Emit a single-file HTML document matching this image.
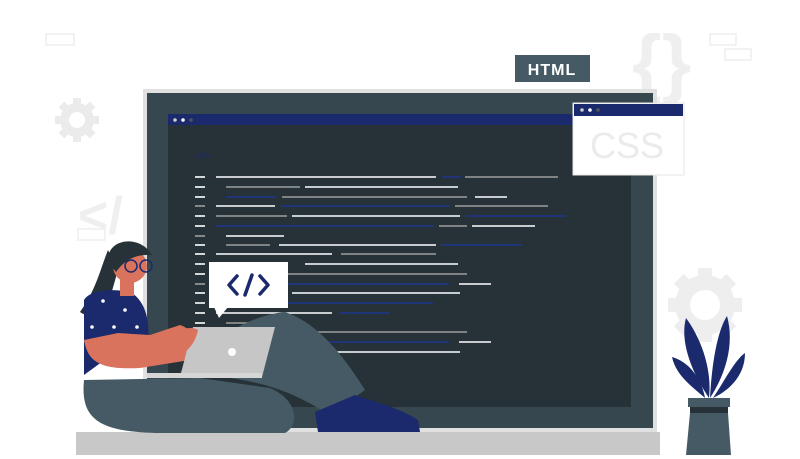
<!DOCTYPE html>
<html><head><meta charset="utf-8"><style>html,body{margin:0;padding:0;background:#fff;width:800px;height:459px;overflow:hidden}svg{display:block}</style></head>
<body>
<svg width="800" height="459" viewBox="0 0 800 459" xmlns="http://www.w3.org/2000/svg" font-family="Liberation Sans, sans-serif">
<rect x="46" y="34" width="28" height="11" fill="none" stroke="#eee" stroke-width="1.5"/>
<rect x="710" y="34" width="26" height="11" fill="none" stroke="#eee" stroke-width="1.5"/>
<rect x="725" y="49" width="26" height="11" fill="none" stroke="#eee" stroke-width="1.5"/>
<rect x="78" y="229" width="27" height="11" fill="none" stroke="#eee" stroke-width="1.5"/>
<text x="632" y="88" font-size="76" fill="#efefef" font-weight="bold">{}</text>
<g fill="#ebebeb"><circle cx="77" cy="120" r="17"/><rect x="73" y="98" width="8" height="44"/><rect x="55" y="116" width="44" height="8"/><rect x="73" y="98" width="8" height="44" transform="rotate(45 77 120)"/><rect x="73" y="98" width="8" height="44" transform="rotate(-45 77 120)"/></g>
<circle cx="77" cy="120" r="8" fill="#fff"/>
<text x="78" y="233" font-size="52" fill="#efefef" font-weight="bold">&lt;/</text>
<g fill="#eeeeee"><circle cx="705" cy="305" r="30"/><rect x="698" y="268" width="14" height="74"/><rect x="668" y="298" width="74" height="14"/><rect x="698" y="268" width="14" height="74" transform="rotate(45 705 305)"/><rect x="698" y="268" width="14" height="74" transform="rotate(-45 705 305)"/></g>
<circle cx="705" cy="305" r="15" fill="#fff"/>
<rect x="143" y="89" width="514" height="344" fill="#e0e0e0"/>
<rect x="147" y="93" width="506" height="335" fill="#37474f"/>
<rect x="168" y="114" width="463" height="293" fill="#263238"/>
<rect x="168" y="114" width="430" height="11" fill="#1a2a6c"/>
<circle cx="175" cy="120" r="1.8" fill="#ccc"/><circle cx="183" cy="120" r="1.8" fill="#fff"/><circle cx="191" cy="120" r="1.8" fill="#555"/>
<text x="195" y="159" font-size="10" fill="#1a2a6c">&lt;/&gt;</text>
<g stroke-width="1.6">
<g stroke="#fff"><line x1="195" y1="177" x2="205" y2="177"/><line x1="216" y1="177" x2="436" y2="177"/><line x1="195" y1="187" x2="205" y2="187"/><line x1="305" y1="187" x2="458" y2="187"/><line x1="195" y1="197" x2="205" y2="197"/><line x1="475" y1="197" x2="507" y2="197"/><line x1="216" y1="206" x2="275" y2="206"/><line x1="195" y1="216" x2="205" y2="216"/><line x1="292" y1="216" x2="460" y2="216"/><line x1="195" y1="226" x2="205" y2="226"/><line x1="472" y1="226" x2="535" y2="226"/><line x1="226" y1="236" x2="284" y2="236"/><line x1="195" y1="245" x2="205" y2="245"/><line x1="279" y1="245" x2="436" y2="245"/><line x1="195" y1="254" x2="205" y2="254"/><line x1="216" y1="254" x2="332" y2="254"/><line x1="195" y1="264" x2="205" y2="264"/><line x1="305" y1="264" x2="458" y2="264"/><line x1="195" y1="274" x2="205" y2="274"/><line x1="459" y1="284" x2="491" y2="284"/><line x1="195" y1="293" x2="205" y2="293"/><line x1="292" y1="293" x2="460" y2="293"/><line x1="195" y1="303" x2="205" y2="303"/><line x1="216" y1="313" x2="332" y2="313"/><line x1="195" y1="313" x2="205" y2="313"/><line x1="195" y1="323" x2="205" y2="323"/><line x1="459" y1="342" x2="491" y2="342"/><line x1="292" y1="352" x2="460" y2="352"/></g>
<g stroke="#9e9e9e"><line x1="465" y1="177" x2="558" y2="177"/><line x1="226" y1="187" x2="300" y2="187"/><line x1="282" y1="197" x2="467" y2="197"/><line x1="195" y1="206" x2="205" y2="206"/><line x1="455" y1="206" x2="548" y2="206"/><line x1="216" y1="216" x2="287" y2="216"/><line x1="439" y1="226" x2="467" y2="226"/><line x1="195" y1="236" x2="205" y2="236"/><line x1="226" y1="245" x2="270" y2="245"/><line x1="341" y1="254" x2="436" y2="254"/><line x1="282" y1="274" x2="467" y2="274"/><line x1="195" y1="284" x2="205" y2="284"/><line x1="226" y1="323" x2="300" y2="323"/><line x1="282" y1="332" x2="467" y2="332"/></g>
<g stroke="#1f3590"><line x1="442" y1="177" x2="461" y2="177"/><line x1="226" y1="197" x2="276" y2="197"/><line x1="281" y1="206" x2="449" y2="206"/><line x1="465" y1="216" x2="566" y2="216"/><line x1="216" y1="226" x2="433" y2="226"/><line x1="441" y1="245" x2="522" y2="245"/><line x1="281" y1="284" x2="449" y2="284"/><line x1="216" y1="303" x2="433" y2="303"/><line x1="340" y1="313" x2="390" y2="313"/><line x1="281" y1="342" x2="449" y2="342"/></g>
</g>
<rect x="573" y="103" width="111" height="72" fill="#fff" stroke="#e6e6e6"/>
<rect x="574" y="104" width="109" height="12" fill="#1a2a6c"/>
<circle cx="582" cy="110" r="1.8" fill="#ccc"/><circle cx="590" cy="110" r="1.8" fill="#fff"/><circle cx="598" cy="110" r="1.8" fill="#555"/>
<text x="590" y="158" font-size="36" fill="#ebebeb">CSS</text>
<rect x="515" y="55" width="75" height="27" fill="#455a64"/>
<text x="552" y="75" font-size="16" fill="#fff" text-anchor="middle" font-weight="bold" letter-spacing="1">HTML</text>
<rect x="76" y="432" width="584" height="23" fill="#c8c8c8"/>
<g fill="#1a2a6c"><path d="M709 398 C690 370 680 340 686 318 C702 340 712 370 709 398Z"/><path d="M710 398 C712 360 718 330 727 316 C735 345 725 375 710 398Z"/><path d="M705 398 C690 385 676 375 672 357 C690 362 702 380 705 398Z"/><path d="M713 398 C725 380 735 360 745 353 C745 375 730 390 713 398Z"/></g>
<rect x="688" y="398" width="42" height="9" fill="#455a64"/>
<rect x="690" y="407" width="38" height="6" fill="#263238"/>
<path d="M690 413 H728 L731 455 H686 Z" fill="#455a64"/>
<!-- person -->
<path d="M84 380 C80 420 100 432 160 433 L285 433 C300 425 298 400 270 388 L200 378 Z" fill="#455a64"/>
<path d="M180 372 C210 340 250 315 285 312 C315 322 340 350 365 390 L330 415 C305 400 280 385 230 378 Z" fill="#455a64"/>
<path d="M315 412 L355 395 C375 402 400 408 418 420 L420 432 L318 432 Z" fill="#1a2a6c"/>
<path d="M108 250 C100 270 96 290 80 312 C88 318 100 316 108 305 L118 270 Z" fill="#263238"/>
<path d="M84 300 C90 290 110 288 130 292 C145 300 150 320 148 340 L125 345 L84 375 Z" fill="#1a2a6c"/>
<g fill="#fff"><circle cx="103" cy="301" r="1.8"/><circle cx="125" cy="310" r="1.8"/><circle cx="114" cy="327" r="1.8"/><circle cx="137" cy="327" r="1.8"/><circle cx="92" cy="327" r="1.8"/></g>
<path d="M84 340 C88 362 100 370 140 368 L190 360 C200 345 195 330 180 325 L150 335 L118 333 Z" fill="#d9735e"/>
<rect x="120" y="280" width="14" height="16" fill="#d9735e"/>
<circle cx="130" cy="266" r="17" fill="#d9735e"/>
<path d="M108 262 C106 238 140 234 152 255 C138 254 126 258 116 272 Z" fill="#263238"/>
<circle cx="131" cy="266" r="6" fill="none" stroke="#1a2a6c" stroke-width="1.5"/><circle cx="146" cy="266" r="6" fill="none" stroke="#1a2a6c" stroke-width="1.5"/>
<path d="M193 327 H275 L262 377 H180 Z" fill="#c6c6c6"/>
<rect x="147" y="373" width="115" height="5" fill="#d6d6d6"/>
<circle cx="232" cy="352" r="4" fill="#fff"/>
<path d="M160 340 C175 330 190 325 198 330 C195 345 185 355 170 360 Z" fill="#d9735e"/>
<rect x="209" y="262" width="79" height="46" fill="#fff"/>
<path d="M214 307 L219 318 L228 307 Z" fill="#fff"/>
<g stroke="#1a2a6c" stroke-width="3.5" fill="none" stroke-linecap="round" stroke-linejoin="round"><path d="M237 276 L229 285 L237 294"/><path d="M260 276 L268 285 L260 294"/><path d="M252 275 L245 295"/></g>
</svg>
</body></html>
